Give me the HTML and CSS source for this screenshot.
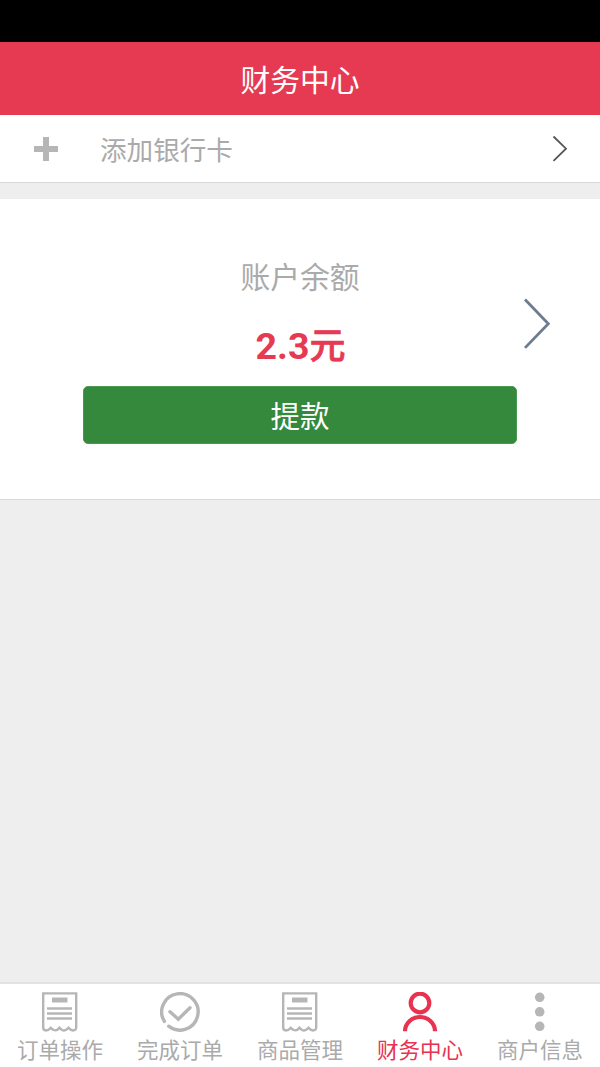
FILE: index.html
```
<!DOCTYPE html>
<html lang="zh-CN">
<head>
<meta charset="utf-8">
<title>财务中心</title>
<link rel="stylesheet" href="styles.css">
</head>
<body>
<div class="app">
  <div class="status"></div>
  <header class="header"><h1 class="title">财务中心</h1></header>
  <main class="content">
    <div class="bank-row">
      <svg class="plus" viewBox="0 0 24 24"><path d="M9 0h6v9h9v6h-9v9H9v-9H0V9h9z"/></svg>
      <span class="bank-label">添加银行卡</span>
      <svg class="chevron" viewBox="0 0 16 28"><path d="M1.5 1.5 14 13.7 1.5 25.9"/></svg>
    </div>
    <section class="balance">
      <div class="balance-main">
        <div class="balance-label">账户余额</div>
        <div class="amount">2.3<span class="unit">元</span></div>
        <button class="withdraw">提款</button>
      </div>
      <svg class="chevron-large" viewBox="0 0 28 52"><path d="M2 1.5 25.3 25.7 2 49.9"/></svg>
    </section>
  </main>
  <nav class="tabs">
    <a class="tab">
      <svg class="icon" viewBox="0 0 40 40"><path class="line" d="M3.2 1.4H36.2V35.5Q36 38.5 33 38.5Q30.5 38.3 28.5 35.8Q25 39.8 22 38Q20.5 37 19.5 35.8Q17 39.3 13.5 38Q12 37 10.8 35.8Q8.5 38.5 6 38.5Q3.2 38.3 3.2 35.5Z"/><path class="line" d="M7 16.5H32M7 21.5H32M7 26.5H32"/><path class="solid" d="M12 5.5h15.5v5H12z"/></svg>
      <span class="tab-label">订单操作</span>
    </a>
    <a class="tab">
      <svg class="icon" viewBox="0 0 40 40"><path class="ring" d="M4.4 29.4A18.2 18.2 0 1 1 8.7 34.2"/><path class="ring" d="M10 19.7 18.3 27.2 30 15.7"/></svg>
      <span class="tab-label">完成订单</span>
    </a>
    <a class="tab">
      <svg class="icon" viewBox="0 0 40 40"><path class="line" d="M3.2 1.4H36.2V35.5Q36 38.5 33 38.5Q30.5 38.3 28.5 35.8Q25 39.8 22 38Q20.5 37 19.5 35.8Q17 39.3 13.5 38Q12 37 10.8 35.8Q8.5 38.5 6 38.5Q3.2 38.3 3.2 35.5Z"/><path class="line" d="M7 16.5H32M7 21.5H32M7 26.5H32"/><path class="solid" d="M12 5.5h15.5v5H12z"/></svg>
      <span class="tab-label">商品管理</span>
    </a>
    <a class="tab active">
      <svg class="icon" viewBox="0 0 40 40"><circle class="person" cx="20" cy="11" r="9.3"/><path class="person" d="M5 39.2A15 14.2 0 0 1 35 39.2"/></svg>
      <span class="tab-label">财务中心</span>
    </a>
    <a class="tab">
      <svg class="icon" viewBox="0 0 40 40"><circle class="solid" cx="19.7" cy="5.3" r="4.8"/><circle class="solid" cx="19.7" cy="19.8" r="4.8"/><circle class="solid" cx="19.7" cy="34.3" r="4.8"/></svg>
      <span class="tab-label">商户信息</span>
    </a>
  </nav>
</div>
</body>
</html>
```
FILE: styles.css
```
* { box-sizing: border-box; }
body {
  margin: 0;
  font-family: Roboto, "Noto Sans CJK SC", sans-serif;
}
.app {
  display: flex;
  flex-direction: column;
  height: 1067px;
  background: #eee;
}
.status { height: 41.5px; background: #000; }
.header {
  height: 73.5px;
  display: flex;
  align-items: center;
  justify-content: center;
  background: #e63a52;
}
.title {
  margin: 5px 0 0;
  color: #fff;
  font-size: 29.8px;
  font-weight: 400;
  line-height: 40px;
}
.content { flex: 1; }
.bank-row {
  height: 68px;
  display: flex;
  align-items: center;
  padding: 0 32px 0 34px;
  border-bottom: 1px solid #d9d9d9;
  background: #fff;
}
.plus { width: 24px; height: 24px; fill: #b6b6b6; }
.bank-label {
  margin: 5px 0 0 42px;
  color: #aaa;
  font-size: 26.6px;
  line-height: 36px;
}
.chevron {
  width: 16px;
  height: 28px;
  margin-left: auto;
  fill: none;
  stroke: #555;
  stroke-width: 1.8;
}
.balance {
  position: relative;
  height: 301px;
  margin-top: 16px;
  padding: 57px 83px 0;
  border-bottom: 1px solid #d9d9d9;
  background: #fff;
}
.balance-main { text-align: center; }
.balance-label {
  color: #aaa;
  font-size: 29.8px;
  line-height: 44px;
}
.amount {
  margin-top: 21px;
  padding-left: 1px;
  color: #e63a52;
  font-size: 37.5px;
  font-weight: 700;
  line-height: 50px;
}
.unit {
  font-size: 36px;
  font-weight: 500;
  -webkit-text-stroke: 0.7px #e63a52;
}
.withdraw {
  display: block;
  width: 434px;
  height: 58px;
  margin-top: 14px;
  padding: 2px 0 0;
  border: 1px solid #49994f;
  border-radius: 5px;
  background: #35893d;
  color: #fff;
  font: inherit;
  font-size: 29.5px;
  line-height: 56px;
}
.chevron-large {
  position: absolute;
  top: 99px;
  right: 49px;
  width: 28px;
  height: 52px;
  fill: none;
  stroke: #6d7d90;
  stroke-width: 2.8;
}
.tabs {
  display: grid;
  grid-template-columns: repeat(5, 1fr);
  height: 85px;
  border-top: 2px solid #e2e2e2;
  background: #fff;
}
.tab {
  display: flex;
  flex-direction: column;
  align-items: center;
  padding-top: 8px;
  color: #aaa;
}
.active { color: #e8324f; }
.icon {
  width: 40px;
  height: 40px;
  fill: none;
  stroke: #b6b6b6;
}
.line { stroke-width: 2.4; }
.ring { stroke-width: 3.4; stroke-linecap: round; }
.solid { fill: #b6b6b6; stroke: none; }
.person { stroke: #e8324f; stroke-width: 4.2; }
.tab-label {
  margin-top: 4px;
  font-size: 21.5px;
  line-height: 30px;
  white-space: nowrap;
}
```
